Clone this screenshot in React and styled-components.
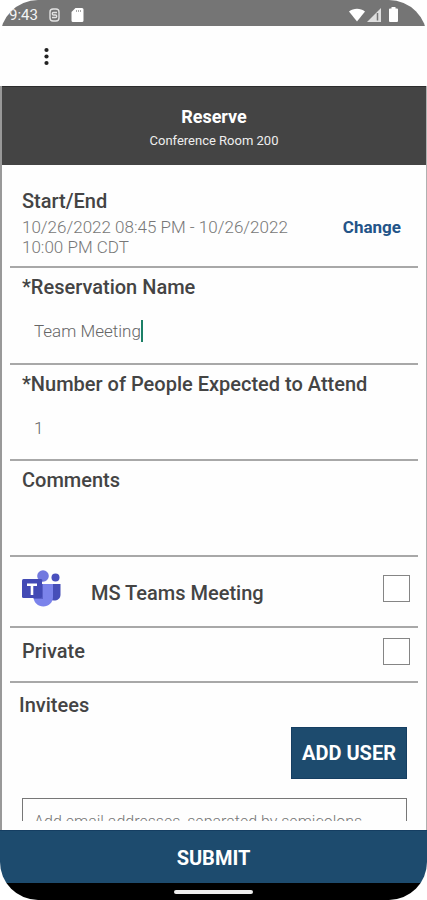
import { useState } from 'react';
import styled, { createGlobalStyle } from 'styled-components';

const GlobalStyle = createGlobalStyle`
  * {
    box-sizing: border-box;
  }

  body {
    margin: 0;
    background: #fff;
    font-family: Roboto, 'Liberation Sans', sans-serif;
  }

  button,
  input,
  textarea {
    font-family: inherit;
  }
`;

const Screen = styled.div`
  display: flex;
  flex-direction: column;
  height: 100vh;
  overflow: hidden;
  border-radius: 38px;
  background: #fefefe;
`;

const StatusBar = styled.div`
  display: flex;
  align-items: center;
  justify-content: space-between;
  height: 26px;
  padding: 3px 28px 0 9px;
  background: #757575;
  color: #f4f4f4;
  font-size: 15px;
`;

const StatusGroup = styled.div`
  display: flex;
  align-items: center;
  gap: ${({ $gap }) => $gap}px;

  svg {
    display: block;
  }
`;

const AppBar = styled.div`
  display: flex;
  align-items: center;
  height: 60px;
  padding-left: 36px;
`;

const MenuButton = styled.button`
  display: flex;
  padding: 0;
  border: 0;
  background: none;
`;

const Body = styled.div`
  display: flex;
  flex: 1;
  flex-direction: column;
  min-height: 0;
  border-left: 2px solid #999;
  border-right: 1px solid #b0b0b0;
`;

const Header = styled.header`
  display: flex;
  flex-direction: column;
  align-items: center;
  height: 79px;
  padding-top: 19px;
  border-top: 1px solid #2c2c2c;
  background: #444;
  color: #fff;

  h1 {
    margin: 0;
    font-size: 18px;
    font-weight: 700;
    line-height: 22px;
  }

  p {
    margin: 0;
    color: #eee;
    font-size: 13px;
    line-height: 26px;
  }
`;

const Form = styled.form`
  flex: 1;
  min-height: 0;
  margin-bottom: 9px;
  padding: 0 8px;
  overflow: hidden;
`;

const Field = styled.div`
  display: flex;
  flex-direction: column;
  height: ${({ $height }) => $height || 96}px;
  padding: 7px 12px 0;
  border-bottom: 2px solid #a8a8a8;
`;

const labelText = `
  color: #444;
  font-size: 20px;
  font-weight: 500;
  line-height: 24px;
`;

const Label = styled.label`
  ${labelText}
`;

const Heading = styled.h2`
  ${labelText}
  margin: 0;
`;

const DateField = styled(Field)`
  height: 103px;
  padding-top: 24px;
`;

const DateRow = styled.div`
  display: flex;
  align-items: flex-start;
  justify-content: space-between;
  padding-top: 4px;

  p {
    margin: 0;
    max-width: 280px;
    color: #777;
    font-size: 17px;
    font-weight: 300;
    line-height: 20px;
  }
`;

const ChangeButton = styled.button`
  padding: 0 5px 0 0;
  border: 0;
  background: none;
  color: #235488;
  font-size: 17px;
  font-weight: 700;
  line-height: 20px;
`;

const InputLine = styled.div`
  display: flex;
  align-items: center;
  height: 44px;
  margin-top: 10px;
  padding-left: 12px;
`;

const TextInput = styled.input`
  field-sizing: content;
  padding: 0;
  border: 0;
  outline: 0;
  background: none;
  caret-color: transparent;
  color: #666;
  font-size: 17px;
  font-weight: 300;
`;

const Caret = styled.span`
  width: 2px;
  height: 22px;
  background: #1b7f66;
`;

const CommentInput = styled.textarea`
  flex: 1;
  padding: 8px 12px;
  border: 0;
  outline: 0;
  resize: none;
  background: none;
  color: #666;
  font-size: 17px;
  font-weight: 300;
`;

const CheckRow = styled.div`
  display: flex;
  align-items: center;
  height: ${({ $height }) => $height}px;
  padding: 0 8px 7px 12px;
  border-bottom: 2px solid #a8a8a8;

  svg {
    margin-right: 30px;
  }

  label {
    flex: 1;
    padding-top: ${({ $drop }) => ($drop ? 10 : 0)}px;
  }
`;

const CheckBox = styled.input`
  width: 27px;
  height: 27px;
  margin: 0;
  border: 1px solid #858585;
  appearance: none;
  background: #fff;

  &:checked {
    background: #1d4b6e;
  }
`;

const Invitees = styled.div`
  display: flex;
  flex-direction: column;
  padding: 10px 11px 0 9px;
`;

const AddButton = styled.button`
  align-self: flex-end;
  height: 52px;
  margin: 10px 0 19px;
  padding: 0 10px;
  border: 1px solid #153e62;
  background: #1d4b6e;
  color: #fff;
  font-size: 20px;
  font-weight: 700;
`;

const EmailInput = styled.input`
  height: 46px;
  margin-left: 3px;
  padding: 0 11px;
  border: 1px solid #777;
  border-radius: 0;
  outline: 0;
  background: none;
  font-size: 16px;
  font-weight: 300;

  &::placeholder {
    color: #777;
  }
`;

const SubmitButton = styled.button`
  height: 53px;
  padding: 2px 0 0;
  border: 0;
  border-top: 1px solid #153e62;
  background: #1d4b6e;
  color: #fff;
  font-size: 20px;
  font-weight: 700;
`;

const NavBar = styled.div`
  display: flex;
  align-items: center;
  justify-content: center;
  height: 17px;
  background: #000;

  span {
    width: 79px;
    height: 4px;
    border-radius: 2px;
    background: #eee;
  }
`;

function ScreenStatus() {
  return (
    <StatusBar>
      <StatusGroup $gap={11}>
        <span>9:43</span>
        <svg width='11' height='14' viewBox='0 0 11 14' fill='none' stroke='#e2e2e2'>
          <rect x='1' y='1' width='9' height='12' rx='3' strokeWidth='1.4' />
          <path d='M8 4.500H4.500a1.200 1.200 0 0 0 0 2.500h2a1.200 1.200 0 0 1 0 2.500H3' strokeWidth='1.3' />
        </svg>
        <svg width='13' height='14' viewBox='0 0 13 14'>
          <path d='M4.500 0H11a1.500 1.500 0 0 1 1.500 1.500v11A1.500 1.500 0 0 1 11 14H2a1.500 1.500 0 0 1-1.500-1.500V4z' fill='#fff' />
          <path d='M5.500 2v2M7.500 2v2M9.500 2v2' stroke='#aaa' />
        </svg>
      </StatusGroup>
      <StatusGroup $gap={2}>
        <svg width='16' height='14' viewBox='0 0 16 14'>
          <path d='M0 3.500C4.500-.3 11.500-.3 16 3.500L8 13.500z' fill='#fff' />
        </svg>
        <svg width='14' height='14' viewBox='0 0 14 14'>
          <path d='M14 0v14H0z' fill='#dedede' />
          <path d='M10.500 5v7.500' stroke='#757575' strokeWidth='1.500' />
        </svg>
        <svg width='16' height='15' viewBox='0 0 16 15'>
          <path d='M8.500 0h4v1.500h1.500a1 1 0 0 1 1 1V14a1 1 0 0 1-1 1H7a1 1 0 0 1-1-1V2.500a1 1 0 0 1 1-1h1.500z' fill='#fff' />
        </svg>
      </StatusGroup>
    </StatusBar>
  );
}

function TeamsIcon() {
  return (
    <svg width='39' height='37' viewBox='0 0 39 37'>
      <circle cx='33.500' cy='7.500' r='4' fill='#4950bd' />
      <path d='M25 14h13.500v10.500c0 4-3 6-6.500 6-3 0-5-1.500-7-4z' fill='#464eb8' />
      <circle cx='21' cy='6' r='5.800' fill='#7279df' />
      <path d='M11.500 14H31v13c0 5.500-4.500 9.500-9.700 9.500s-9.800-4-9.800-9.500z' fill='#7b83eb' />
      <path d='M11.500 14H21v15h-9.200c-.2-.6-.3-1.300-.3-2z' fill='#5960c8' />
      <path d='M15.300 9H19c1 0 1.500.5 1.500 1.500v1a5.800 5.800 0 0 1-5.200-2.500z' fill='#5960c8' />
      <rect y='9' width='20' height='19' rx='1.500' fill='#424ab5' />
      <path d='M5 13.500h10v2.400h-3.700v9H8.700v-9H5z' fill='#fff' />
    </svg>
  );
}

function App() {
  const [name, setName] = useState('Team Meeting');
  const [people, setPeople] = useState('1');

  return (
    <>
      <GlobalStyle />
      <Screen>
        <ScreenStatus />
        <AppBar>
          <MenuButton type='button' aria-label='Menu'>
            <svg width='20' height='20' viewBox='0 0 20 20' fill='#222'>
              <circle cx='10.500' cy='4' r='2.100' />
              <circle cx='10.500' cy='10.500' r='2.100' />
              <circle cx='10.500' cy='17' r='2.100' />
            </svg>
          </MenuButton>
        </AppBar>
        <Body>
          <Header>
            <h1>Reserve</h1>
            <p>Conference Room 200</p>
          </Header>
          <Form id='reserve' onSubmit={(e) => e.preventDefault()}>
            <DateField>
              <Heading>Start/End</Heading>
              <DateRow>
                <p>10/26/2022 08:45 PM - 10/26/2022 10:00 PM CDT</p>
                <ChangeButton type='button'>Change</ChangeButton>
              </DateRow>
            </DateField>
            <Field $height={97}>
              <Label htmlFor='name'>*Reservation Name</Label>
              <InputLine>
                <TextInput id='name' value={name} onChange={(e) => setName(e.target.value)} />
                <Caret />
              </InputLine>
            </Field>
            <Field>
              <Label htmlFor='people'>*Number of People Expected to Attend</Label>
              <InputLine>
                <TextInput id='people' value={people} onChange={(e) => setPeople(e.target.value)} />
              </InputLine>
            </Field>
            <Field>
              <Label htmlFor='comments'>Comments</Label>
              <CommentInput id='comments' />
            </Field>
            <CheckRow $height={71} $drop>
              <TeamsIcon />
              <Label htmlFor='teams'>MS Teams Meeting</Label>
              <CheckBox id='teams' type='checkbox' />
            </CheckRow>
            <CheckRow $height={55}>
              <Label htmlFor='private'>Private</Label>
              <CheckBox id='private' type='checkbox' />
            </CheckRow>
            <Invitees>
              <Label htmlFor='emails'>Invitees</Label>
              <AddButton type='button'>ADD USER</AddButton>
              <EmailInput id='emails' placeholder='Add email addresses, separated by semicolons' />
            </Invitees>
          </Form>
        </Body>
        <SubmitButton type='submit' form='reserve'>
          SUBMIT
        </SubmitButton>
        <NavBar>
          <span />
        </NavBar>
      </Screen>
    </>
  );
}

export default App;
